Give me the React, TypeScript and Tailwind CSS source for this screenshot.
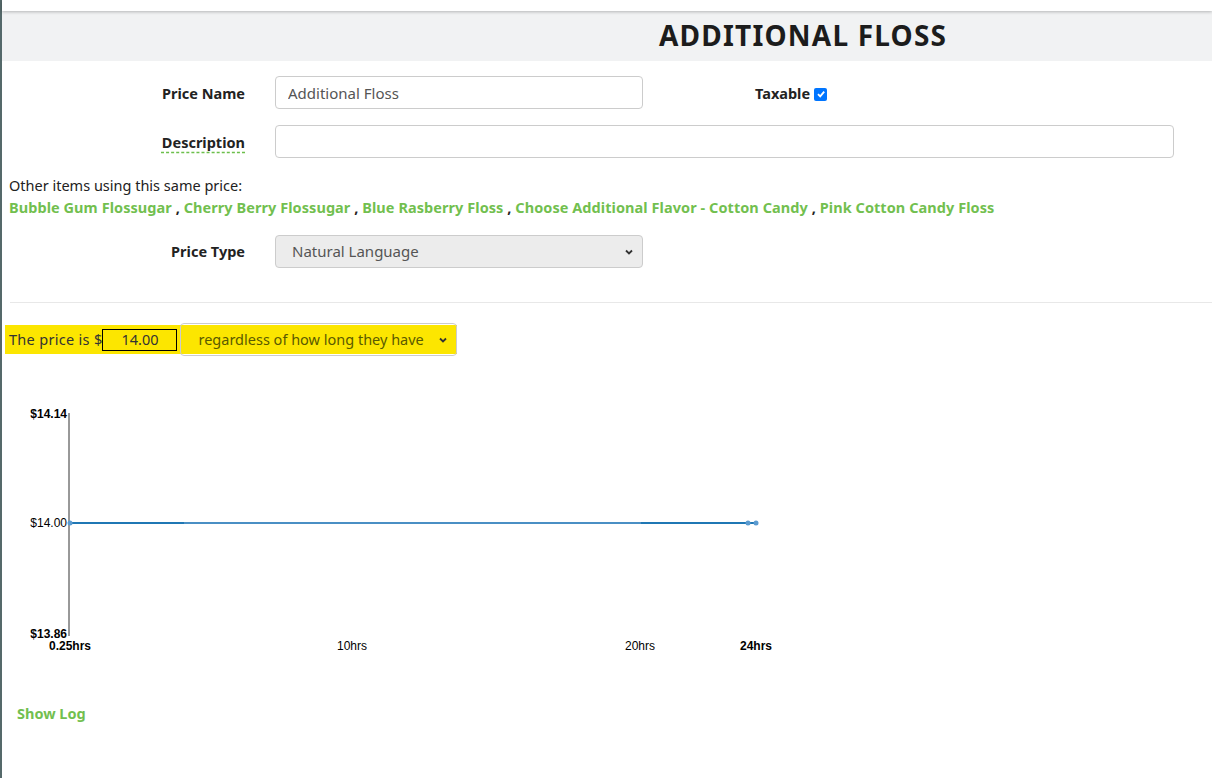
import React from "react";

const links = [
  "Bubble Gum Flossugar",
  "Cherry Berry Flossugar",
  "Blue Rasberry Floss",
  "Choose Additional Flavor - Cotton Candy",
  "Pink Cotton Candy Floss",
];

const PriceChart = () => {
  // x axis: 0.25hrs at 69, 24hrs at 756
  const x0 = 67;
  return (
    <svg width="800" height="270" className="block" style={{ fontFamily: '"Liberation Sans", Arial, sans-serif' }}>
      <line x1={x0} y1="17" x2={x0} y2="240" stroke="#333" strokeWidth="1" />
      <text x={x0 - 2} y="22" textAnchor="end" fontSize="12" fontWeight="bold" fill="#000">$14.14</text>
      <text x={x0 - 2} y="131" textAnchor="end" fontSize="12" fill="#000">$14.00</text>
      <text x={x0 - 2} y="242" textAnchor="end" fontSize="12" fontWeight="bold" fill="#000">$13.86</text>

      <line x1={x0} y1="127" x2="182" y2="127" stroke="#1f77b4" strokeWidth="2" />
      <line x1="182" y1="127" x2="639" y2="127" stroke="#4a8fc4" strokeWidth="2" />
      <line x1="639" y1="127" x2="752" y2="127" stroke="#1f77b4" strokeWidth="2" />
      <circle cx={x0 + 1} cy="127" r="2.5" fill="#5b9bd0" />
      <circle cx="746" cy="127" r="2.5" fill="#5b9bd0" />
      <circle cx="754" cy="127" r="2.5" fill="#5b9bd0" />

      <text x="68" y="254" textAnchor="middle" fontSize="12" fontWeight="bold" fill="#000">0.25hrs</text>
      <text x="350" y="254" textAnchor="middle" fontSize="12" fill="#000">10hrs</text>
      <text x="638" y="254" textAnchor="middle" fontSize="12" fill="#000">20hrs</text>
      <text x="754" y="254" textAnchor="middle" fontSize="12" fontWeight="bold" fill="#000">24hrs</text>
    </svg>
  );
};

const Chevron = () => (
  <svg width="10" height="10" viewBox="0 0 10 10" className="shrink-0">
    <path d="M2 3.5 L5 6.5 L8 3.5" fill="none" stroke="#333" strokeWidth="1.8" />
  </svg>
);

export default function App() {
  return (
    <div
      className="min-h-[778px] w-full bg-white border-l-2 border-[#55696a] text-[#222]"
      style={{ fontFamily: '"Noto Sans", "Open Sans", sans-serif' }}
    >
      <div className="h-[11px] bg-white shadow-[0_1px_3px_rgba(0,0,0,0.25)] relative z-10" />
      <div className="h-[50px] bg-[#f1f2f3] flex items-center pl-[657px] pb-[3px]">
        <h1 className="text-[28px] font-bold tracking-[1.2px] text-[#1c1c1c] leading-none">ADDITIONAL FLOSS</h1>
      </div>

      <div className="pt-[15px]">
        <div className="flex items-center h-[33px]">
          <label className="w-[243px] text-right text-[14.5px] font-bold pt-[3px]">Price Name</label>
          <input
            readOnly
            value="Additional Floss"
            className="ml-[30px] w-[368px] h-[33px] border border-[#ccc] rounded px-3 text-[15px] text-[#555] outline-none"
          />
          <span className="ml-[112px] text-[14.5px] font-bold flex items-center gap-1 pt-[3px]">
            Taxable
            <span className="w-[13px] h-[13px] rounded-[2px] bg-[#0075ff] flex items-center justify-center">
              <svg width="10" height="10" viewBox="0 0 10 10">
                <path d="M2 5.2 L4.2 7.4 L8.2 2.6" fill="none" stroke="#fff" strokeWidth="1.8" />
              </svg>
            </span>
          </span>
        </div>

        <div className="flex items-center h-[33px] mt-[16px]">
          <label className="w-[243px] text-right text-[14.5px] font-bold underline decoration-dashed decoration-[#6cbf4b] underline-offset-4 pt-[3px]">
            Description
          </label>
          <input readOnly className="ml-[30px] w-[899px] h-[33px] border border-[#ccc] rounded px-3 outline-none" />
        </div>

        <div className="pl-[7px] mt-[16px] text-[14.5px] leading-[22px]">
          <div>Other items using this same price:</div>
          <div className="font-bold text-[#72bf4f] tracking-[0.06px]">
            {links.map((l, i) => (
              <span key={l}>
                <a href="#" className="text-[#72bf4f]">{l}</a>
                {i < links.length - 1 && <span className="text-[#222]"> , </span>}
              </span>
            ))}
          </div>
        </div>

        <div className="flex items-center h-[33px] mt-[17px]">
          <label className="w-[243px] text-right text-[14.5px] font-bold pt-[1px]">Price Type</label>
          <div className="ml-[30px] w-[368px] h-[33px] border border-[#ccc] rounded bg-[#ececec] flex items-center justify-between pl-4 pr-2 text-[15px] text-[#555]">
            <span>Natural Language</span>
            <Chevron />
          </div>
        </div>

        <div className="ml-[8px] mt-[34px] border-t border-[#e8e8e8]" />

        <div className="mt-[22px] ml-[3px] flex items-center">
          <div className="flex items-center h-[29px] bg-[#fce600] pl-[4px] text-[14.5px] text-[#333]">
            <span className="tracking-[0.3px]">The price is $</span>
            <span className="w-[75px] h-[22px] border border-black flex items-center pl-[18px] text-[#333]">14.00</span>
            <div className="ml-[3px] w-[277px] h-[33px] border border-[#ccc] rounded flex items-center justify-between pl-[17px] pr-[8px] text-[#5a5a00]">
              <span className="whitespace-nowrap overflow-hidden">regardless of how long they have</span>
              <Chevron />
            </div>
          </div>
        </div>

        <div className="mt-[42px]">
          <PriceChart />
        </div>

        <div className="mt-[35px] pl-[15px]">
          <a href="#" className="text-[#72bf4f] font-bold text-[14.5px]">Show Log</a>
        </div>
      </div>
    </div>
  );
}
